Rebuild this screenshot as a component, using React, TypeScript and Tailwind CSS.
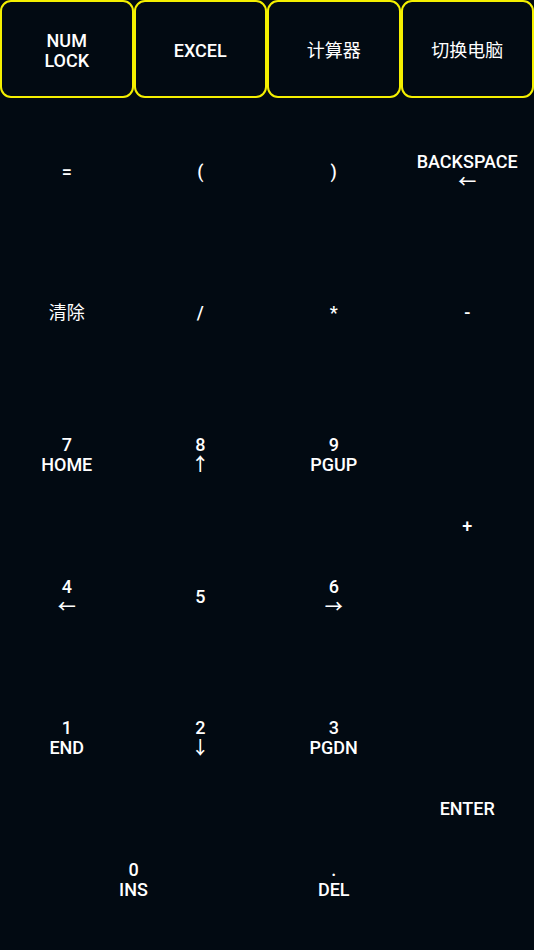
const topKeys = [
  { label: ["NUM", "LOCK"] },
  { label: ["EXCEL"] },
  { label: ["计算器"], cjk: true },
  { label: ["切换电脑"], cjk: true },
];

type Key = {
  lines: string[];
  cls?: string;
  cjk?: boolean;
};

const keys: Key[] = [
  { lines: ["="] },
  { lines: ["("] },
  { lines: [")"] },
  { lines: ["BACKSPACE", "←"] },
  { lines: ["清除"], cjk: true },
  { lines: ["/"] },
  { lines: ["*"] },
  { lines: ["-"] },
  { lines: ["7", "HOME"] },
  { lines: ["8", "↑"] },
  { lines: ["9", "PGUP"] },
  { lines: ["+"], cls: "row-span-2" },
  { lines: ["4", "←"] },
  { lines: ["5"] },
  { lines: ["6", "→"] },
  { lines: ["1", "END"] },
  { lines: ["2", "↓"] },
  { lines: ["3", "PGDN"] },
  { lines: ["ENTER"], cls: "row-span-2" },
  { lines: ["0", "INS"], cls: "col-span-2" },
  { lines: [".", "DEL"] },
];

export default function App() {
  return (
    <div
      className="w-[534px] h-[950px] bg-[#020a12] text-white flex flex-col overflow-hidden"
      style={{ fontFamily: 'Roboto, "Noto Sans CJK SC", sans-serif' }}
    >
      {/* top buttons */}
      <div className="grid grid-cols-4 h-[99px] shrink-0">
        {topKeys.map((k, i) => (
          <button
            key={i}
            className={
              "h-[98px] pt-[4px] border-2 border-[#f5f000] rounded-[11px] flex flex-col items-center justify-center text-[18px] leading-[20px] " +
              (k.cjk ? "font-normal" : "font-medium")
            }
          >
            {k.label.map((l) => (
              <span key={l}>{l}</span>
            ))}
          </button>
        ))}
      </div>

      {/* keypad */}
      <div className="grid grid-cols-4 grid-rows-6 flex-1 pt-[1px]">
        {keys.map((k, i) => (
          <button
            key={i}
            className={
              "pt-[2px] flex flex-col items-center justify-center text-[18px] leading-[20px] " +
              (k.cjk ? "font-normal " : "font-medium ") +
              (k.cls ?? "")
            }
          >
            {k.lines.map((l) => (
              <span key={l}>{l}</span>
            ))}
          </button>
        ))}
      </div>
    </div>
  );
}
